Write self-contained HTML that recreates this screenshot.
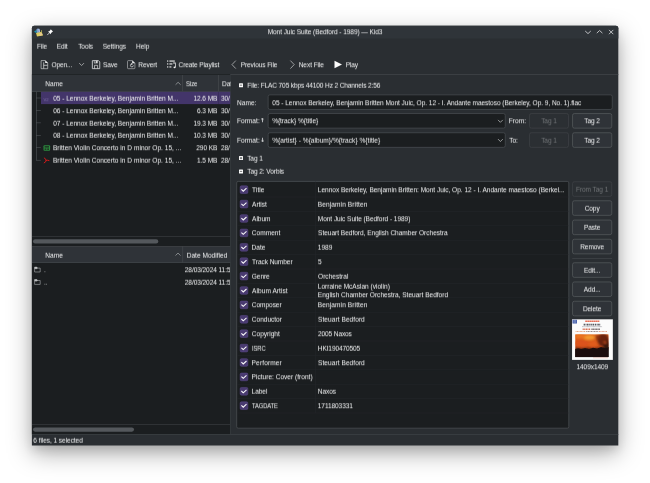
<!DOCTYPE html>
<html lang="en">
<head>
<meta charset="utf-8">
<title>Mont Juic Suite (Bedford - 1989) — Kid3</title>
<style>
*{box-sizing:border-box;margin:0;padding:0}
html,body{width:650px;height:483px;overflow:hidden;background:#fff}
body{font-family:"Liberation Sans",sans-serif;font-size:6.55px;color:#f0f1f2;position:relative;line-height:1}
.page{position:absolute;left:0;top:0;width:650px;height:483px;overflow:hidden;background:#fff}
.win{position:absolute;left:32px;top:26px;width:586px;height:419px;background:#2a2e32;border-radius:2.5px 2.5px 0 0;box-shadow:0 8px 24px rgba(0,0,0,.34),0 5px 10px rgba(0,0,0,.1)}
.o{position:absolute;left:0;top:0;width:650px;height:483px;overflow:hidden}
.o svg{position:absolute;left:0;top:0}
.L{position:absolute;left:0;top:0;width:650px;height:483px;will-change:transform;pointer-events:none}
.L0{transform:translate(0px,0.25px) rotate(0.004deg)}
.L1{transform:translate(0px,0.75px) rotate(0.004deg)}
.L span{position:absolute;white-space:nowrap;height:9px;line-height:9px;}
.c{text-align:center}.r{text-align:right}.k{overflow:hidden}
.d{color:#6f7275}
</style>
</head>
<body>
<div class="page">
<div class="win"></div>
<div class="o">
<svg width="650" height="483" viewBox="0 0 650 483">
<defs>
<filter id="bi" x="-20%" y="-20%" width="140%" height="140%"><feGaussianBlur stdDeviation="0.35"/></filter>
<linearGradient id="g1" x1="0" y1="0" x2="0" y2="1"><stop offset="0" stop-color="#e0661c"/><stop offset="0.5" stop-color="#cf501a"/><stop offset="0.62" stop-color="#8a3214"/><stop offset="0.7" stop-color="#2a1510"/><stop offset="1" stop-color="#1e110d"/></linearGradient>
<radialGradient id="g2" cx="0.35" cy="0.2" r="0.5"><stop offset="0" stop-color="#ff9a2a" stop-opacity="0.9"/><stop offset="1" stop-color="#ff9a2a" stop-opacity="0"/></radialGradient>
<filter id="bl" x="-30%" y="-30%" width="160%" height="160%"><feGaussianBlur stdDeviation="1.1"/></filter>
<filter id="bt" x="-10%" y="-50%" width="120%" height="200%"><feGaussianBlur stdDeviation="0.3"/></filter>
<clipPath id="cp"><rect x="3.1" y="14.9" width="33.5" height="23"/></clipPath>
</defs>
<path d="M31.9 445.45 V28.2 Q31.9 25.7 34.4 25.7 H615.8 Q618.3 25.7 618.3 28.2 V445.45 Z" fill="#2a2e32"/>
<path d="M31.9 38.5 V28.2 Q31.9 25.7 34.4 25.7 H615.8 Q618.3 25.7 618.3 28.2 V38.5 Z" fill="#2f3439"/>
<g filter="url(#bi)"><path d="M34 31.8 L36.6 29.8 L36.8 33.2 Z" fill="#1a93ae"/><path d="M36.4 29.6 Q38 27.6 39.5 29.6 L40.1 32.8 L37 33.2 Z" fill="#7f9dcc"/><path d="M38.2 29 L39.3 28.8 L40.2 31.8 L39 32Z" fill="#aebfe0"/><path d="M36 33 L41.6 31.8 L43 35.4 L37 36.6 Z" fill="#dccd62"/><path d="M39.2 33.6 L41.8 33 L42.6 35 L40 35.7Z" fill="#e6c892"/><path d="M41.1 30 L41.9 30.2 L42.1 32.2 L41.3 32.2Z" fill="#b9b860"/></g>
<g transform="translate(46.5 28.8) scale(0.5)"><path d="M8.5 1 L13 5.5 L11.5 6.2 L9.2 8.5 L8.8 11 L3 5.2 L5.5 4.8 L7.8 2.5 Z" fill="#fcfcfc"/><path d="M5.8 8.2 L1.5 12.5" stroke="#fcfcfc" stroke-width="1.4" fill="none"/></g>
<g stroke="#d4d6d8" stroke-width="0.85" fill="none"><path d="M585.2 31 L588 33.6 L590.8 31"/><path d="M596.8 33.1 L599.6 30.5 L602.4 33.1"/><path d="M609 29.9 L613.3 34.2 M613.3 29.9 L609 34.2"/></g>
<g stroke="#e4e5e6" stroke-width="0.6" fill="none"><path d="M41.1 60.6 H45.4 L47.7 62.9 V68.7 H41.1 Z"/><path d="M43.7 62.3 V68.5 M43.7 65.3 H47.5" stroke-width="0.7"/></g><path d="M45.2 60.4 L47.9 63.1 H45.2 Z" fill="#f0f0f0"/>
<path d="M79.2 63.1 L81.6 65.5 L84 63.1" stroke="#e4e5e6" stroke-width="0.6" fill="none"/>
<path d="M92.35 60.65 H98.5 L99.75 61.9 V68.65 H92.35 Z" stroke="#cdcfd1" stroke-width="0.9" fill="none"/><path d="M93.9 60.6 H97.7 V63.3 H93.9 Z" fill="#d8d9da"/><rect x="94.5" y="60.9" width="1.2" height="1.9" fill="#2a2e32"/><path d="M94.5 68.6 V65.3 H97.6 V68.6" stroke="#d8d9da" stroke-width="0.7" fill="none"/>
<g stroke="#e4e5e6" stroke-width="0.6" fill="none"><path d="M128.4 60.6 H132.4 L134.9 63.1 V67.9 Q134.9 68.7 134.1 68.7 H128.4 Q127.5 68.7 127.5 67.9 V61.4 Q127.5 60.6 128.4 60.6 Z" stroke="#c4c6c8"/><path d="M133.4 65.4 A1.5 1.5 0 1 1 132 63.9" stroke-width="0.7"/></g><path d="M132.2 60.4 L135.1 63.3 H132.2 Z" fill="#f0f0f0"/><path d="M131.4 63 L133 64 L131.4 65 Z" fill="#f0f0f0"/>
<g fill="#f0f0f0"><rect x="167" y="60.5" width="1.3" height="1.1"/><rect x="169.4" y="60.5" width="5.4" height="1.1"/><rect x="167" y="63.4" width="1.3" height="1.1"/><rect x="169.4" y="63.4" width="3" height="1.1"/><rect x="167" y="66.4" width="1.3" height="1.1"/><rect x="169.4" y="66.4" width="2" height="1.1"/><path d="M173.2 62.6 H175.7 V67 H175 V63.4 H173.2 Z"/><ellipse cx="174.6" cy="67.3" rx="1.1" ry="0.9"/></g>
<path d="M235.8 60.6 L232 64.6 L235.8 68.6" stroke="#e4e5e6" stroke-width="0.6" fill="none"/>
<path d="M290.4 60.6 L294.2 64.6 L290.4 68.6" stroke="#e4e5e6" stroke-width="0.6" fill="none"/>
<path d="M334.5 60.7 L342 64.5 L334.5 68.3 Z" fill="#fcfcfc"/>
<rect x="32" y="74.15" width="586.3" height="0.9" fill="#3f4347"/>
<rect x="31.9" y="74.2" width="198.6" height="360.2" fill="#1b1e20"/>
<rect x="230.3" y="74.2" width="0.6" height="360.2" fill="#3f4347"/>
<rect x="32" y="75" width="198.3" height="16.3" fill="#2f3338"/>
<rect x="32" y="91" width="198.3" height="0.8" fill="#42464a"/>
<rect x="182.3" y="75" width="0.7" height="16.3" fill="#45494d"/>
<rect x="218.3" y="75" width="0.7" height="16.3" fill="#45494d"/>
<path d="M175.6 84.7 L178.1 82.3 L180.6 84.7" stroke="#c0c2c4" stroke-width="0.6" fill="none"/>
<rect x="41" y="91.8" width="189.3" height="12.3" fill="#43356a"/>
<rect x="218.35" y="91.8" width="0.5" height="12.3" fill="#30294e"/>
<rect x="36.05" y="91.7" width="0.5" height="68.5" fill="#5a5e62"/>
<rect x="36.05" y="97.75" width="4.8" height="0.5" fill="#5a5e62"/>
<rect x="36.05" y="110.19" width="4.8" height="0.5" fill="#5a5e62"/>
<rect x="36.05" y="122.63" width="4.8" height="0.5" fill="#5a5e62"/>
<rect x="36.05" y="135.07" width="4.8" height="0.5" fill="#5a5e62"/>
<rect x="36.05" y="147.51" width="4.8" height="0.5" fill="#5a5e62"/>
<rect x="36.05" y="159.95" width="4.8" height="0.5" fill="#5a5e62"/>
<rect x="43.5" y="145.16" width="6.6" height="5.6" rx="1" fill="#2c8a3e"/><path d="M44.6 146.96 h4.4 M44.6 149.06 h1.8 M47.2 149.06 h1.8" stroke="#19231c" stroke-width="1.2"/>
<path d="M44.3 158 Q46.2 158.8 46.1 160.4 Q46.2 162 44.2 162.9 M46.1 160.4 Q47.6 159.9 49 160.5" stroke="#d31a1a" stroke-width="1" fill="none" stroke-linecap="round"/>
<rect x="32" y="236.2" width="198.3" height="0.7" fill="#383c40"/>
<rect x="33" y="239.3" width="125.3" height="4.2" rx="2.1" fill="#54585c"/>
<rect x="32" y="246.3" width="198.3" height="16.3" fill="#2f3338"/>
<rect x="32" y="246" width="198.3" height="0.7" fill="#42464a"/>
<rect x="32" y="262.2" width="198.3" height="0.8" fill="#42464a"/>
<rect x="182.4" y="246.3" width="0.7" height="16.3" fill="#45494d"/>
<path d="M175.5 255.5 L178 253.1 L180.5 255.5" stroke="#c0c2c4" stroke-width="0.6" fill="none"/>
<g transform="translate(34.3 266.8)"><path d="M0.3 0.3 H2.6 L3.2 1.3 H5.9 V5.2 H0.3 Z M0.3 1.9 H2.8 L3.2 1.3" stroke="#dcdddf" stroke-width="0.45" fill="none"/><path d="M0.3 0.3 H2.6 L3.2 1.3 L2.8 1.9 H0.3Z" fill="#dcdddf" opacity="0.8"/></g>
<g transform="translate(34.3 279.2)"><path d="M0.3 0.3 H2.6 L3.2 1.3 H5.9 V5.2 H0.3 Z M0.3 1.9 H2.8 L3.2 1.3" stroke="#dcdddf" stroke-width="0.45" fill="none"/><path d="M0.3 0.3 H2.6 L3.2 1.3 L2.8 1.9 H0.3Z" fill="#dcdddf" opacity="0.8"/></g>
<rect x="32" y="424.1" width="198.3" height="0.7" fill="#383c40"/>
<rect x="33" y="427.5" width="101" height="4.2" rx="2.1" fill="#54585c"/>
<rect x="32" y="434.1" width="586.3" height="0.8" fill="#3c4044"/>
<rect x="239" y="83.2" width="4" height="4" rx="0.5" fill="#fcfcfc"/>
<path d="M239.8 85.2 h2.4" stroke="#1b1e20" stroke-width="0.6"/>
<rect x="268.15" y="94.85" width="344.1" height="14.6" rx="1.8" fill="#1b1e20" stroke="#4c5054" stroke-width="0.7"/>
<rect x="268.15" y="113.55" width="237.1" height="14.6" rx="1.8" fill="#1b1e20" stroke="#4c5054" stroke-width="0.7"/>
<path d="M498 119.9 L500.4 122.3 L502.8 119.9" stroke="#e4e5e6" stroke-width="0.6" fill="none"/>
<rect x="529.55" y="113.55" width="38.9" height="14.6" rx="1.8" fill="#2b2f33" stroke="#404448" stroke-width="0.7"/>
<rect x="572.55" y="113.55" width="39.2" height="14.6" rx="1.8" fill="#2f3338" stroke="#575b5f" stroke-width="0.7"/>
<rect x="268.15" y="132.75" width="237.1" height="14.6" rx="1.8" fill="#1b1e20" stroke="#4c5054" stroke-width="0.7"/>
<path d="M498 139.1 L500.4 141.5 L502.8 139.1" stroke="#e4e5e6" stroke-width="0.6" fill="none"/>
<rect x="529.55" y="132.75" width="38.9" height="14.6" rx="1.8" fill="#2b2f33" stroke="#404448" stroke-width="0.7"/>
<rect x="572.55" y="132.75" width="39.2" height="14.6" rx="1.8" fill="#2f3338" stroke="#575b5f" stroke-width="0.7"/>
<rect x="239" y="156.1" width="4" height="4" rx="0.5" fill="#fcfcfc"/>
<path d="M239.8 158.1 h2.4" stroke="#1b1e20" stroke-width="0.6"/>
<path d="M241 156.9 v2.4" stroke="#1b1e20" stroke-width="0.6"/>
<rect x="239" y="169.4" width="4" height="4" rx="0.5" fill="#fcfcfc"/>
<path d="M239.8 171.4 h2.4" stroke="#1b1e20" stroke-width="0.6"/>
<rect x="236.7" y="181.4" width="332.1" height="246.8" rx="1.5" fill="#1b1e20" stroke="#4a4e52" stroke-width="0.8"/>
<rect x="237" y="196.75" width="331.5" height="0.5" fill="#24272a"/>
<rect x="240.15" y="185.85" width="7.7" height="7.7" rx="1.3" fill="#493a70" stroke="#5e4d8f" stroke-width="0.5"/>
<g transform="translate(239.9 185.6)"><path d="M1.5 3.8 L3.35 5.6 L6.6 2.6" stroke="#fcfcfc" stroke-width="1.05" fill="none"/></g>
<rect x="237" y="211.15" width="331.5" height="0.5" fill="#24272a"/>
<rect x="240.15" y="200.25" width="7.7" height="7.7" rx="1.3" fill="#493a70" stroke="#5e4d8f" stroke-width="0.5"/>
<g transform="translate(239.9 200)"><path d="M1.5 3.8 L3.35 5.6 L6.6 2.6" stroke="#fcfcfc" stroke-width="1.05" fill="none"/></g>
<rect x="237" y="225.55" width="331.5" height="0.5" fill="#24272a"/>
<rect x="240.15" y="214.65" width="7.7" height="7.7" rx="1.3" fill="#493a70" stroke="#5e4d8f" stroke-width="0.5"/>
<g transform="translate(239.9 214.4)"><path d="M1.5 3.8 L3.35 5.6 L6.6 2.6" stroke="#fcfcfc" stroke-width="1.05" fill="none"/></g>
<rect x="237" y="239.95" width="331.5" height="0.5" fill="#24272a"/>
<rect x="240.15" y="229.05" width="7.7" height="7.7" rx="1.3" fill="#493a70" stroke="#5e4d8f" stroke-width="0.5"/>
<g transform="translate(239.9 228.8)"><path d="M1.5 3.8 L3.35 5.6 L6.6 2.6" stroke="#fcfcfc" stroke-width="1.05" fill="none"/></g>
<rect x="237" y="254.35" width="331.5" height="0.5" fill="#24272a"/>
<rect x="240.15" y="243.45" width="7.7" height="7.7" rx="1.3" fill="#493a70" stroke="#5e4d8f" stroke-width="0.5"/>
<g transform="translate(239.9 243.2)"><path d="M1.5 3.8 L3.35 5.6 L6.6 2.6" stroke="#fcfcfc" stroke-width="1.05" fill="none"/></g>
<rect x="237" y="268.75" width="331.5" height="0.5" fill="#24272a"/>
<rect x="240.15" y="257.85" width="7.7" height="7.7" rx="1.3" fill="#493a70" stroke="#5e4d8f" stroke-width="0.5"/>
<g transform="translate(239.9 257.6)"><path d="M1.5 3.8 L3.35 5.6 L6.6 2.6" stroke="#fcfcfc" stroke-width="1.05" fill="none"/></g>
<rect x="237" y="283.15" width="331.5" height="0.5" fill="#24272a"/>
<rect x="240.15" y="272.25" width="7.7" height="7.7" rx="1.3" fill="#493a70" stroke="#5e4d8f" stroke-width="0.5"/>
<g transform="translate(239.9 272)"><path d="M1.5 3.8 L3.35 5.6 L6.6 2.6" stroke="#fcfcfc" stroke-width="1.05" fill="none"/></g>
<rect x="237" y="297.55" width="331.5" height="0.5" fill="#24272a"/>
<rect x="240.15" y="286.65" width="7.7" height="7.7" rx="1.3" fill="#493a70" stroke="#5e4d8f" stroke-width="0.5"/>
<g transform="translate(239.9 286.4)"><path d="M1.5 3.8 L3.35 5.6 L6.6 2.6" stroke="#fcfcfc" stroke-width="1.05" fill="none"/></g>
<rect x="237" y="311.95" width="331.5" height="0.5" fill="#24272a"/>
<rect x="240.15" y="301.05" width="7.7" height="7.7" rx="1.3" fill="#493a70" stroke="#5e4d8f" stroke-width="0.5"/>
<g transform="translate(239.9 300.8)"><path d="M1.5 3.8 L3.35 5.6 L6.6 2.6" stroke="#fcfcfc" stroke-width="1.05" fill="none"/></g>
<rect x="237" y="326.35" width="331.5" height="0.5" fill="#24272a"/>
<rect x="240.15" y="315.45" width="7.7" height="7.7" rx="1.3" fill="#493a70" stroke="#5e4d8f" stroke-width="0.5"/>
<g transform="translate(239.9 315.2)"><path d="M1.5 3.8 L3.35 5.6 L6.6 2.6" stroke="#fcfcfc" stroke-width="1.05" fill="none"/></g>
<rect x="237" y="340.75" width="331.5" height="0.5" fill="#24272a"/>
<rect x="240.15" y="329.85" width="7.7" height="7.7" rx="1.3" fill="#493a70" stroke="#5e4d8f" stroke-width="0.5"/>
<g transform="translate(239.9 329.6)"><path d="M1.5 3.8 L3.35 5.6 L6.6 2.6" stroke="#fcfcfc" stroke-width="1.05" fill="none"/></g>
<rect x="237" y="355.15" width="331.5" height="0.5" fill="#24272a"/>
<rect x="240.15" y="344.25" width="7.7" height="7.7" rx="1.3" fill="#493a70" stroke="#5e4d8f" stroke-width="0.5"/>
<g transform="translate(239.9 344)"><path d="M1.5 3.8 L3.35 5.6 L6.6 2.6" stroke="#fcfcfc" stroke-width="1.05" fill="none"/></g>
<rect x="237" y="369.55" width="331.5" height="0.5" fill="#24272a"/>
<rect x="240.15" y="358.65" width="7.7" height="7.7" rx="1.3" fill="#493a70" stroke="#5e4d8f" stroke-width="0.5"/>
<g transform="translate(239.9 358.4)"><path d="M1.5 3.8 L3.35 5.6 L6.6 2.6" stroke="#fcfcfc" stroke-width="1.05" fill="none"/></g>
<rect x="237" y="383.95" width="331.5" height="0.5" fill="#24272a"/>
<rect x="240.15" y="373.05" width="7.7" height="7.7" rx="1.3" fill="#493a70" stroke="#5e4d8f" stroke-width="0.5"/>
<g transform="translate(239.9 372.8)"><path d="M1.5 3.8 L3.35 5.6 L6.6 2.6" stroke="#fcfcfc" stroke-width="1.05" fill="none"/></g>
<rect x="237" y="398.35" width="331.5" height="0.5" fill="#24272a"/>
<rect x="240.15" y="387.45" width="7.7" height="7.7" rx="1.3" fill="#493a70" stroke="#5e4d8f" stroke-width="0.5"/>
<g transform="translate(239.9 387.2)"><path d="M1.5 3.8 L3.35 5.6 L6.6 2.6" stroke="#fcfcfc" stroke-width="1.05" fill="none"/></g>
<rect x="237" y="412.75" width="331.5" height="0.5" fill="#24272a"/>
<rect x="240.15" y="401.85" width="7.7" height="7.7" rx="1.3" fill="#493a70" stroke="#5e4d8f" stroke-width="0.5"/>
<g transform="translate(239.9 401.6)"><path d="M1.5 3.8 L3.35 5.6 L6.6 2.6" stroke="#fcfcfc" stroke-width="1.05" fill="none"/></g>
<rect x="315" y="181.6" width="0.5" height="231.4" fill="#24272a"/>
<rect x="572.55" y="181.75" width="39.2" height="14.6" rx="1.8" fill="#2b2f33" stroke="#404448" stroke-width="0.7"/>
<rect x="572.55" y="200.75" width="39.2" height="14.6" rx="1.8" fill="#2f3338" stroke="#575b5f" stroke-width="0.7"/>
<rect x="572.55" y="220.05" width="39.2" height="14.6" rx="1.8" fill="#2f3338" stroke="#575b5f" stroke-width="0.7"/>
<rect x="572.55" y="239.25" width="39.2" height="14.6" rx="1.8" fill="#2f3338" stroke="#575b5f" stroke-width="0.7"/>
<rect x="572.55" y="262.75" width="39.2" height="14.6" rx="1.8" fill="#2f3338" stroke="#575b5f" stroke-width="0.7"/>
<rect x="572.55" y="281.95" width="39.2" height="14.6" rx="1.8" fill="#2f3338" stroke="#575b5f" stroke-width="0.7"/>
<rect x="572.55" y="301.25" width="39.2" height="14.6" rx="1.8" fill="#2f3338" stroke="#575b5f" stroke-width="0.7"/>
<rect x="572.2" y="258.5" width="39.9" height="0.5" fill="#4a4e52"/>
<g transform="translate(572.05 319.3)">
<rect width="40.8" height="40.6" fill="#fbfbfb"/>
<rect x="0.5" y="0.5" width="4.4" height="3.7" fill="#3c57a6"/>
<path d="M1.3 1.2 h2.8 M1.3 2.3 h2.8 M1.3 3.4 h2.8" stroke="#aebbe0" stroke-width="0.45"/>
<g filter="url(#bt)" fill="none">
<path d="M13.3 2.05 h14.3" stroke="#e4573a" stroke-width="1.5" stroke-dasharray="1.5 0.5"/>
<path d="M11.6 5.35 h17" stroke="#55555c" stroke-width="1.9" stroke-dasharray="1.3 0.6 0.9 0.5 1.6 0.7"/>
<path d="M10.2 7.35 h19.8" stroke="#8a8a90" stroke-width="0.7" stroke-dasharray="0.8 0.4"/>
<path d="M10.6 9.9 h8" stroke="#d9694e" stroke-width="1.6" stroke-dasharray="1.1 0.5"/>
<path d="M19.4 9.9 h8.6" stroke="#6a5a5a" stroke-width="1.6" stroke-dasharray="1.2 0.5 0.8 0.5"/>
<path d="M3.6 12.25 h10" stroke="#e3a07a" stroke-width="1.1" stroke-dasharray="0.9 0.5"/>
<path d="M14.2 12.25 h12" stroke="#9a8a88" stroke-width="1.1" stroke-dasharray="0.9 0.5 1.3 0.5"/>
<path d="M27 12.25 h8.2" stroke="#e09a80" stroke-width="1.1" stroke-dasharray="0.9 0.5"/>
<path d="M21 38.5 h15" stroke="#eaa090" stroke-width="0.5"/>
</g>
<g clip-path="url(#cp)">
<rect x="3.1" y="14.9" width="33.5" height="23" fill="url(#g1)"/>
<g filter="url(#bl)">
<ellipse cx="17" cy="18.2" rx="6" ry="2.4" fill="#f39a30"/>
<ellipse cx="8" cy="17" rx="5" ry="2.2" fill="#ea7420"/>
<ellipse cx="10" cy="24" rx="7" ry="3.5" fill="#dc521a"/>
<ellipse cx="21" cy="24.5" rx="5" ry="3" fill="#e05c1a"/>
<ellipse cx="31" cy="20.5" rx="6" ry="6.5" fill="#5e2010" opacity="0.92"/>
<ellipse cx="34.5" cy="26" rx="3.5" ry="5" fill="#32160e" opacity="0.95"/>
<ellipse cx="25.5" cy="18" rx="2.5" ry="2.4" fill="#8a3012" opacity="0.85"/>
<ellipse cx="33" cy="23.2" rx="1.5" ry="1.3" fill="#d8521a" opacity="0.9"/>
</g>
<g filter="url(#bt)">
<path d="M3 38 V29.6 L6 29 L9 29.8 L13 28.6 L17 29.6 L21 28.4 L25 29.2 L29 27.8 L33 28.6 L37 27.6 V38 Z" fill="#1e110d"/>
</g>
</g>
</g>
</svg>
</div>
<div class="L L0">
<span class="c" style="left:32px;top:27px;width:586px;letter-spacing:-0.072px;">Mont Juic Suite (Bedford - 1989) — Kid3</span>
<span style="left:51.45px;top:60px;letter-spacing:-0.092px;">Open...</span>
<span style="left:102.95px;top:60px;letter-spacing:-0.100px;">Save</span>
<span style="left:138.3px;top:60px;letter-spacing:-0.100px;">Revert</span>
<span style="left:178.55px;top:60px;letter-spacing:-0.107px;">Create Playlist</span>
<span style="left:240.7px;top:60px;letter-spacing:-0.092px;">Previous File</span>
<span style="left:298.7px;top:60px;letter-spacing:-0.063px;">Next File</span>
<span style="left:345.7px;top:60px;letter-spacing:-0.100px;">Play</span>
<span style="left:45.3px;top:79px;letter-spacing:0.017px;">Name</span>
<span style="left:186.37px;top:79px;transform:scaleX(0.917);transform-origin:0 50%;letter-spacing:-0.100px;">Size</span>
<span class="k" style="left:222px;top:79px;width:8.7px;letter-spacing:-0.080px;">Dat</span>
<span style="left:53.15px;top:106px;letter-spacing:-0.014px;">06 - Lennox Berkeley, Benjamin Britten M...</span>
<span class="r" style="left:182.5px;top:106px;width:34.8px;letter-spacing:-0.080px;">6.3 MB</span>
<span class="k" style="left:220.9px;top:106px;width:9.4px;letter-spacing:-0.080px;">30/</span>
<span style="left:52.9px;top:143px;letter-spacing:0.026px;">Britten Violin Concerto in D minor Op. 15, ...</span>
<span class="r" style="left:182.5px;top:143px;width:34.8px;letter-spacing:-0.080px;">290 KB</span>
<span class="k" style="left:220.9px;top:143px;width:9.4px;letter-spacing:-0.080px;">28/</span>
<span style="left:43.5px;top:95px;color:#7a6ca6;font-size:4.2px;letter-spacing:-0.080px;">V2</span>
<span style="left:43.9px;top:265px;color:#c9cacb;letter-spacing:-0.080px;">.</span>
<span class="k" style="left:184.8px;top:265px;width:45.6px;letter-spacing:-0.080px;">28/03/2024 11:5</span>
<span style="left:236.9px;top:98px;letter-spacing:0.087px;">Name:</span>
<span style="left:272.35px;top:98px;letter-spacing:-0.045px;">05 - Lennox Berkeley, Benjamin Britten Mont Juic, Op. 12 - I. Andante maestoso (Berkeley, Op. 9, No. 1).flac</span>
<span style="left:236.9px;top:116px;letter-spacing:0.050px;">Format:</span>
<span style="left:259.95px;top:116px;font-size:5.6px;font-weight:bold;font-family:'DejaVu Sans','Liberation Sans',sans-serif;letter-spacing:0.050px;">↑</span>
<span style="left:272.15px;top:116px;letter-spacing:-0.034px;">%{track} %{title}</span>
<span style="left:508.8px;top:116px;letter-spacing:0.050px;">From:</span>
<span class="c d" style="left:529.2px;top:116px;width:39.6px;letter-spacing:-0.080px;">Tag 1</span>
<span class="c" style="left:572.2px;top:116px;width:39.9px;letter-spacing:-0.080px;">Tag 2</span>
<span style="left:252.1px;top:185px;letter-spacing:0.063px;">Title</span>
<span style="left:317.8px;top:185px;letter-spacing:-0.020px;">Lennox Berkeley, Benjamin Britten: Mont Juic, Op. 12 - I. Andante maestoso (Berkel...</span>
<span style="left:252.1px;top:214px;letter-spacing:-0.038px;">Album</span>
<span style="left:317.8px;top:214px;letter-spacing:-0.055px;">Mont Juic Suite (Bedford - 1989)</span>
<span style="left:251.85px;top:228px;letter-spacing:0.008px;">Comment</span>
<span style="left:318.05px;top:228px;letter-spacing:-0.017px;">Steuart Bedford, English Chamber Orchestra</span>
<span style="left:252.1px;top:257px;letter-spacing:-0.068px;">Track Number</span>
<span style="left:318.05px;top:257px;letter-spacing:-0.080px;">5</span>
<span style="left:252.1px;top:286px;letter-spacing:0.045px;">Album Artist</span>
<span style="left:317.8px;top:290px;">English Chamber Orchestra, Steuart Bedford</span>
<span style="left:251.85px;top:300px;letter-spacing:-0.064px;">Composer</span>
<span style="left:317.8px;top:300px;letter-spacing:0.103px;">Benjamin Britten</span>
<span style="left:251.85px;top:329px;letter-spacing:-0.006px;">Copyright</span>
<span style="left:318.05px;top:329px;letter-spacing:-0.122px;">2005 Naxos</span>
<span style="left:251.6px;top:358px;letter-spacing:0.137px;">Performer</span>
<span style="left:318.05px;top:358px;letter-spacing:0.061px;">Steuart Bedford</span>
<span style="left:251.6px;top:372px;letter-spacing:0.010px;">Picture: Cover (front)</span>
<span style="left:252.1px;top:401px;transform:scaleX(0.882);transform-origin:0 50%;letter-spacing:-0.100px;">TAGDATE</span>
<span style="left:317.8px;top:401px;letter-spacing:-0.094px;">1711803331</span>
<span class="c" style="left:572.2px;top:242px;width:39.9px;letter-spacing:-0.080px;">Remove</span>
<span class="c" style="left:572.2px;top:304px;width:39.9px;letter-spacing:-0.080px;">Delete</span>
<span class="c" style="left:572px;top:362px;width:40.6px;letter-spacing:-0.080px;">1409x1409</span>
</div>
<div class="L L1">
<span style="left:36.9px;top:41px;letter-spacing:-0.100px;">File</span>
<span style="left:56.7px;top:41px;letter-spacing:-0.100px;">Edit</span>
<span style="left:78.2px;top:41px;letter-spacing:-0.100px;">Tools</span>
<span style="left:102.65px;top:41px;letter-spacing:-0.036px;">Settings</span>
<span style="left:135.9px;top:41px;letter-spacing:0.050px;">Help</span>
<span style="left:53.15px;top:93px;letter-spacing:-0.014px;">05 - Lennox Berkeley, Benjamin Britten M...</span>
<span class="r" style="left:182.5px;top:93px;width:34.8px;letter-spacing:-0.080px;">12.6 MB</span>
<span class="k" style="left:220.9px;top:93px;width:9.4px;letter-spacing:-0.080px;">30/</span>
<span style="left:53.15px;top:118px;letter-spacing:-0.014px;">07 - Lennox Berkeley, Benjamin Britten M...</span>
<span class="r" style="left:182.5px;top:118px;width:34.8px;letter-spacing:-0.080px;">19.3 MB</span>
<span class="k" style="left:220.9px;top:118px;width:9.4px;letter-spacing:-0.080px;">30/</span>
<span style="left:53.15px;top:130px;letter-spacing:-0.014px;">08 - Lennox Berkeley, Benjamin Britten M...</span>
<span class="r" style="left:182.5px;top:130px;width:34.8px;letter-spacing:-0.080px;">10.3 MB</span>
<span class="k" style="left:220.9px;top:130px;width:9.4px;letter-spacing:-0.080px;">30/</span>
<span style="left:52.9px;top:155px;letter-spacing:0.026px;">Britten Violin Concerto in D minor Op. 15, ...</span>
<span class="r" style="left:182.5px;top:155px;width:34.8px;letter-spacing:-0.080px;">1.5 MB</span>
<span class="k" style="left:220.9px;top:155px;width:9.4px;letter-spacing:-0.080px;">28/</span>
<span style="left:45.3px;top:250px;letter-spacing:0.017px;">Name</span>
<span style="left:186.7px;top:250px;letter-spacing:0.025px;">Date Modified</span>
<span style="left:43.9px;top:277px;color:#c9cacb;letter-spacing:-0.080px;">..</span>
<span class="k" style="left:184.8px;top:277px;width:45.6px;letter-spacing:-0.080px;">28/03/2024 11:5</span>
<span style="left:33.35px;top:435px;letter-spacing:-0.061px;">6 files, 1 selected</span>
<span style="left:247.3px;top:80px;letter-spacing:-0.130px;">File: FLAC 705 kbps 44100 Hz 2 Channels 2:56</span>
<span style="left:236.9px;top:135px;letter-spacing:0.050px;">Format:</span>
<span style="left:260.2px;top:135px;font-size:5.6px;font-weight:bold;font-family:'DejaVu Sans','Liberation Sans',sans-serif;letter-spacing:-0.100px;">↓</span>
<span style="left:272.15px;top:135px;letter-spacing:0.036px;">%{artist} - %{album}/%{track} %{title}</span>
<span style="left:509.3px;top:135px;letter-spacing:-0.100px;">To:</span>
<span class="c d" style="left:529.2px;top:135px;width:39.6px;letter-spacing:-0.080px;">Tag 1</span>
<span class="c" style="left:572.2px;top:135px;width:39.9px;letter-spacing:-0.080px;">Tag 2</span>
<span style="left:247.2px;top:153px;letter-spacing:-0.100px;">Tag 1</span>
<span style="left:247.2px;top:166px;letter-spacing:-0.079px;">Tag 2: Vorbis</span>
<span style="left:252.1px;top:199px;letter-spacing:-0.040px;">Artist</span>
<span style="left:317.8px;top:199px;letter-spacing:0.103px;">Benjamin Britten</span>
<span style="left:251.6px;top:242px;">Date</span>
<span style="left:317.8px;top:242px;letter-spacing:0.017px;">1989</span>
<span style="left:251.85px;top:271px;letter-spacing:-0.100px;">Genre</span>
<span style="left:318.05px;top:271px;letter-spacing:0.022px;">Orchestral</span>
<span style="left:317.8px;top:281px;">Lorraine McAslan (violin)</span>
<span style="left:251.85px;top:314px;letter-spacing:-0.019px;">Conductor</span>
<span style="left:318.05px;top:314px;letter-spacing:0.061px;">Steuart Bedford</span>
<span style="left:251.66px;top:343px;transform:scaleX(0.890);transform-origin:0 50%;letter-spacing:-0.100px;">ISRC</span>
<span style="left:317.8px;top:343px;letter-spacing:-0.118px;">HKI190470505</span>
<span style="left:251.6px;top:386px;letter-spacing:-0.062px;">Label</span>
<span style="left:317.8px;top:386px;letter-spacing:-0.100px;">Naxos</span>
<span class="c d" style="left:572.2px;top:184px;width:39.9px;letter-spacing:-0.080px;">From Tag 1</span>
<span class="c" style="left:572.2px;top:203px;width:39.9px;letter-spacing:-0.080px;">Copy</span>
<span class="c" style="left:572.2px;top:222px;width:39.9px;letter-spacing:-0.080px;">Paste</span>
<span class="c" style="left:572.2px;top:265px;width:39.9px;letter-spacing:-0.080px;">Edit...</span>
<span class="c" style="left:572.2px;top:284px;width:39.9px;letter-spacing:-0.080px;">Add...</span>
</div>
</div>
</body>
</html>
